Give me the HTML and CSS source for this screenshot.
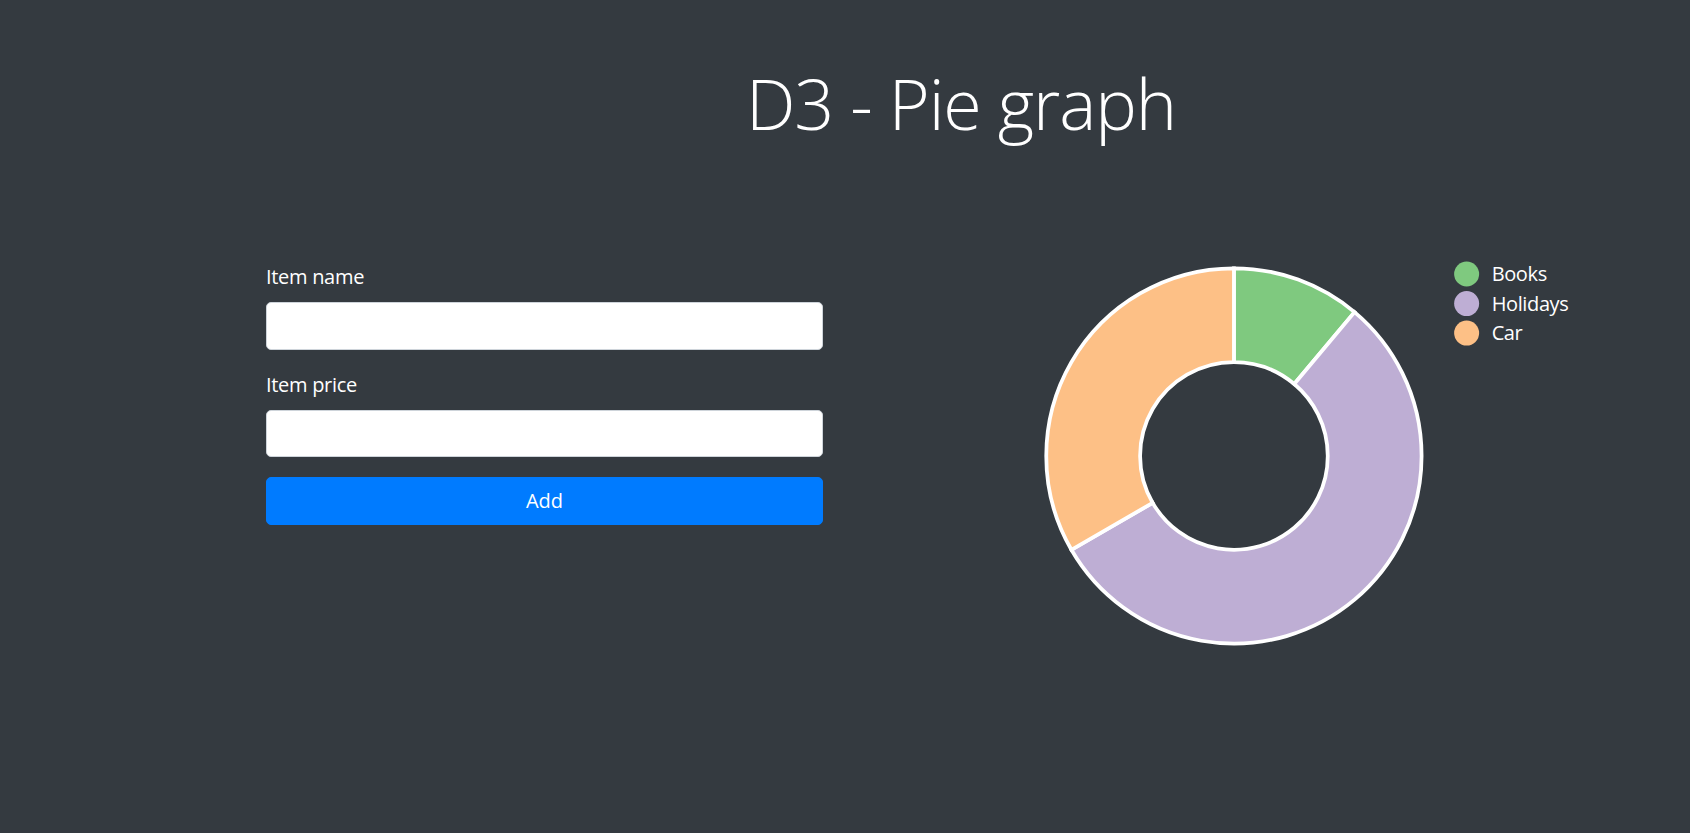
FILE: index.html
```html
<!DOCTYPE html>
<html lang="en">
<head>
<meta charset="utf-8">
<title>D3 - Pie graph</title>
<link rel="stylesheet" href="styles.css">
</head>
<body>
<main class="page">
  <h1 class="title">D3 - Pie graph</h1>
  <div class="row">
    <form class="form">
      <div class="form-group">
        <label class="label" for="name">Item name</label>
        <input class="input" id="name" type="text">
      </div>
      <div class="form-group">
        <label class="label" for="price">Item price</label>
        <input class="input" id="price" type="text">
      </div>
      <button class="btn" type="button">Add</button>
    </form>
    <div class="chart">
      <svg class="chart-svg" width="563" height="563" viewBox="0 0 450 450">
        <g class="slices" stroke="#fff" stroke-width="3">
          <path fill="#7fc97f" d="M155,5 A150,150 0 0 1 251.418,40.093 L203.209,97.547 A75,75 0 0 0 155,80 Z"/>
          <path fill="#beaed4" d="M251.418,40.093 A150,150 0 1 1 25.096,230 L90.048,192.5 A75,75 0 1 0 203.209,97.547 Z"/>
          <path fill="#fdc086" d="M25.096,230 A150,150 0 0 1 155,5 L155,80 A75,75 0 0 0 90.048,192.5 Z"/>
        </g>
        <g class="legend">
          <circle cx="341" cy="9.6" r="10" fill="#7fc97f"/>
          <text x="361" y="15.2">Books</text>
          <circle cx="341" cy="33.2" r="10" fill="#beaed4"/>
          <text x="361" y="38.8">Holidays</text>
          <circle cx="341" cy="56.8" r="10" fill="#fdc086"/>
          <text x="361" y="62.4">Car</text>
        </g>
      </svg>
    </div>
  </div>
</main>
</body>
</html>
```

FILE: styles.css
```css
html, body {
  margin: 0;
  padding: 0;
}

body {
  background: #343a40;
  color: #fff;
  font-family: "Open Sans", "Noto Sans", "Liberation Sans", sans-serif;
  font-size: 20px;
  line-height: 1.5;
  min-height: 833px;
}

.page {
  display: flex;
  flex-direction: column;
}

.title {
  margin: 61px 0 0 0;
  padding-left: 500px;
  width: 922px;
  text-align: center;
  font-size: 70px;
  font-weight: 300;
  line-height: 84px;
  letter-spacing: -1.1px;
  color: #fff;
}

.row {
  display: flex;
  align-items: flex-start;
  margin-top: 117px;
  padding-left: 266px;
}

.form {
  width: 557px;
  display: flex;
  flex-direction: column;
}

.form-group {
  display: flex;
  flex-direction: column;
  margin-bottom: 20px;
}

.label {
  display: block;
  font-size: 20px;
  line-height: 30px;
  letter-spacing: -0.3px;
  margin-bottom: 10px;
  color: #fff;
}

.input {
  box-sizing: border-box;
  height: 47.5px;
  width: 100%;
  border: 1.25px solid #ced4da;
  border-radius: 5px;
  background: #fff;
  font: inherit;
  padding: 0 15px;
}

.btn {
  box-sizing: border-box;
  height: 47.5px;
  width: 100%;
  border: 1.25px solid #007bff;
  border-radius: 5px;
  background: #007bff;
  color: #fff;
  font: inherit;
  font-size: 20px;
  line-height: 30px;
  padding: 0;
}

.chart {
  margin-left: 217px;
}

.chart-svg {
  display: block;
  overflow: visible;
}

.legend text {
  fill: #fff;
  font-family: "Open Sans", "Noto Sans", "Liberation Sans", sans-serif;
  font-size: 16px;
  letter-spacing: -0.3px;
}
```
